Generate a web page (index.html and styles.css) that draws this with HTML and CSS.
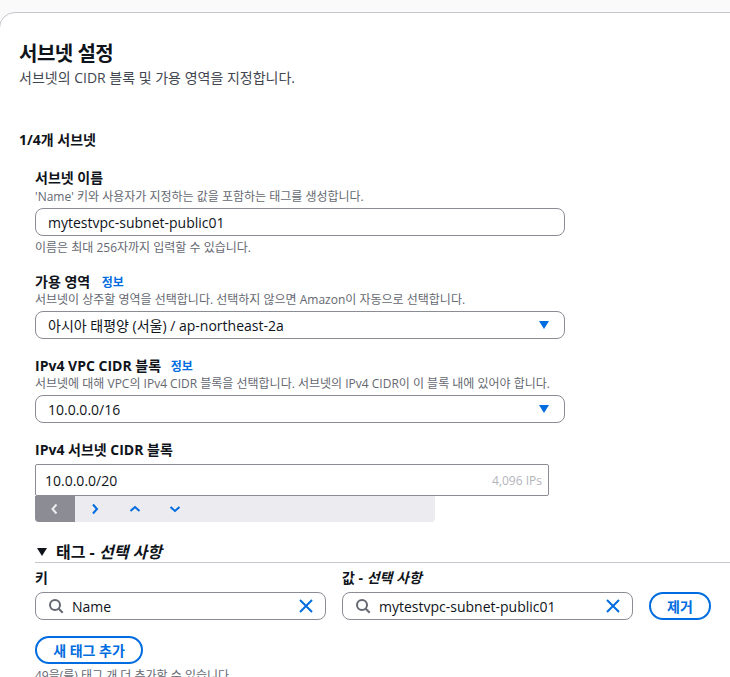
FILE: index.html
```html
<!DOCTYPE html>
<html lang="ko">
<head>
    <meta charset="UTF-8">
    <title>서브넷 설정</title>
    <link rel="stylesheet" href="styles.css">
</head>
<body>
    <div class="card">
        <h1 class="card-title">서브넷 설정</h1>
        <p class="card-desc">서브넷의 CIDR 블록 및 가용 영역을 지정합니다.</p>

        <h2 class="subnet-count">1/4개 서브넷</h2>

        <div class="subnet-form">
            <div class="field field-name">
                <div class="label">서브넷 이름</div>
                <div class="desc">'Name' 키와 사용자가 지정하는 값을 포함하는 태그를 생성합니다.</div>
                <div class="input">mytestvpc-subnet-public01</div>
                <div class="desc hint">이름은 최대 256자까지 입력할 수 있습니다.</div>
            </div>

            <div class="field field-az">
                <div class="label">가용 영역 <a class="info" href="#">정보</a></div>
                <div class="desc">서브넷이 상주할 영역을 선택합니다. 선택하지 않으면 Amazon이 자동으로 선택합니다.</div>
                <div class="input select">
                    <span>아시아 태평양 (서울) / ap-northeast-2a</span>
                    <span class="caret"></span>
                </div>
            </div>

            <div class="field field-vpc">
                <div class="label">IPv4 VPC CIDR 블록 <a class="info" href="#">정보</a></div>
                <div class="desc">서브넷에 대해 VPC의 IPv4 CIDR 블록을 선택합니다. 서브넷의 IPv4 CIDR이 이 블록 내에 있어야 합니다.</div>
                <div class="input select">
                    <span>10.0.0.0/16</span>
                    <span class="caret"></span>
                </div>
            </div>

            <div class="field">
                <div class="label">IPv4 서브넷 CIDR 블록</div>
                <div class="cidr-input">
                    <span>10.0.0.0/20</span>
                    <span class="cidr-count">4,096 IPs</span>
                </div>
                <div class="cidr-steps">
                    <button class="step step-off">
                        <svg width="16" height="16" viewBox="0 0 16 16"><path d="M9.5 3.5 5.5 8l4 4.5"/></svg>
                    </button>
                    <button class="step">
                        <svg width="16" height="16" viewBox="0 0 16 16"><path d="M6 3.5 10 8l-4 4.5"/></svg>
                    </button>
                    <button class="step">
                        <svg width="16" height="16" viewBox="0 0 16 16"><path d="M3.5 10 8 6l4.500 4"/></svg>
                    </button>
                    <button class="step">
                        <svg width="16" height="16" viewBox="0 0 16 16"><path d="M3.500 6 8 10l4.500-4"/></svg>
                    </button>
                </div>
            </div>
        </div>

        <div class="tags">
            <div class="tags-head"><span class="tags-arrow"></span>태그 - <em>선택 사항</em></div>
            <div class="tag-row">
                <div class="tag-col">
                    <div class="label">키</div>
                    <div class="input search">
                        <svg class="search-icon" width="16" height="16" viewBox="0 0 16 16"><circle cx="7" cy="7" r="5"/><path d="m10.700 10.700 4 4"/></svg>
                        <span class="search-text">Name</span>
                        <svg class="clear-icon" width="16" height="16" viewBox="0 0 16 16"><path d="m2 2 12 12M14 2 2 14"/></svg>
                    </div>
                </div>
                <div class="tag-col">
                    <div class="label">값 - <em>선택 사항</em></div>
                    <div class="input search">
                        <svg class="search-icon" width="16" height="16" viewBox="0 0 16 16"><circle cx="7" cy="7" r="5"/><path d="m10.700 10.700 4 4"/></svg>
                        <span class="search-text">mytestvpc-subnet-public01</span>
                        <svg class="clear-icon" width="16" height="16" viewBox="0 0 16 16"><path d="m2 2 12 12M14 2 2 14"/></svg>
                    </div>
                </div>
                <button class="btn btn-remove">제거</button>
            </div>
            <button class="btn btn-add">새 태그 추가</button>
            <div class="desc tag-limit">49을(를) 태그 개 더 추가할 수 있습니다.</div>
        </div>
    </div>
</body>
</html>
```

FILE: styles.css
```css
* {
    margin: 0;
    padding: 0;
    box-sizing: border-box;
    font-family: 'Open Sans', 'Noto Sans CJK KR', sans-serif;
}

html, body {
    height: 677px;
    overflow: hidden;
}

body {
    background: #fafafa;
    color: #0f141a;
    padding-top: 12px;
}

.card {
    width: 760px;
    height: 700px;
    margin-left: -1px;
    padding: 28px 0 0 19px;
    background: white;
    border: 1px solid #c6c6cd;
    border-radius: 16px;
}

.card-title {
    font-size: 20px;
    line-height: 26px;
    font-weight: 700;
    letter-spacing: -0.5px;
}

.card-desc {
    font-size: 14px;
    line-height: 20px;
    color: #424650;
    margin-top: 1px;
}

.subnet-count {
    font-size: 14px;
    line-height: 20px;
    font-weight: 700;
    margin-top: 42px;
}

.subnet-form {
    width: 530px;
    margin: 19px 0 0 16px;
}

.field-name {
    margin-bottom: 17px;
}

.field-az,
.field-vpc {
    margin-bottom: 18px;
}

.label {
    font-size: 14px;
    line-height: 18px;
    font-weight: 700;
}

.label em {
    font-weight: 700;
}

.info {
    margin-left: 8px;
    font-size: 12px;
    line-height: 1;
    color: #006ce0;
    text-decoration: none;
}

.field-vpc .info {
    margin-left: 6px;
}

.desc {
    font-size: 12px;
    line-height: 16px;
    color: #656871;
    margin-top: 2px;
}

.field-az .desc,
.field-vpc .desc {
    margin-top: 1px;
}

.hint {
    margin-top: 4px;
}

.input {
    display: flex;
    align-items: center;
    justify-content: space-between;
    height: 28px;
    margin-top: 3px;
    padding: 0 12px;
    font-size: 14px;
    border: 1px solid #8c8c94;
    border-radius: 8px;
    background: white;
}

.caret {
    width: 0;
    height: 0;
    margin-right: 3px;
    border-left: 5px solid transparent;
    border-right: 5px solid transparent;
    border-top: 8px solid #006ce0;
}

.cidr-input {
    display: flex;
    align-items: center;
    justify-content: space-between;
    width: 514px;
    height: 32px;
    margin-top: 5px;
    padding: 0 6px 0 9px;
    font-size: 14px;
    border: 1px solid #8c8c94;
    border-radius: 2px;
}

.cidr-count {
    font-size: 12px;
    color: #b4b4bb;
}

.cidr-steps {
    display: flex;
    width: 400px;
    height: 26px;
    background: #ebebf0;
    border-radius: 0 0 4px 4px;
    overflow: hidden;
}

.step {
    width: 40px;
    display: flex;
    align-items: center;
    justify-content: center;
    border: none;
    background: none;
}

.step svg {
    fill: none;
    stroke: #006ce0;
    stroke-width: 2;
}

.step-off {
    background: #8c8c94;
}

.step-off svg {
    stroke: #ebebf0;
}

.tags {
    margin: 20px 0 0 16px;
}

.tags-head {
    display: flex;
    align-items: center;
    height: 20px;
    font-size: 16px;
    line-height: 20px;
    font-weight: 700;
    white-space: pre;
}

.tags-head em {
    font-weight: 700;
}

.tags-arrow {
    width: 0;
    height: 0;
    margin: 0 9px 0 2px;
    border-left: 5px solid transparent;
    border-right: 5px solid transparent;
    border-top: 8px solid #0f141a;
}

.tag-row {
    display: flex;
    align-items: flex-end;
    gap: 16px;
    padding-top: 6px;
    border-top: 1px solid #c6c6cd;
}

.tag-col {
    width: 291px;
}

.tag-row .input {
    margin-top: 5px;
}

.search {
    justify-content: flex-start;
}

.search-icon {
    flex: none;
    fill: none;
    stroke: #656871;
    stroke-width: 2;
}

.search-text {
    flex: 1;
    margin-left: 8px;
}

.clear-icon {
    flex: none;
    margin-right: -1px;
    fill: none;
    stroke: #006ce0;
    stroke-width: 2;
}

.btn {
    height: 28px;
    font-size: 14px;
    font-weight: 700;
    color: #006ce0;
    background: white;
    border: 2px solid #006ce0;
    border-radius: 20px;
}

.btn-remove {
    width: 62px;
}

.btn-add {
    display: block;
    width: 108px;
    margin-top: 16px;
}

.tag-limit {
    margin-top: 4px;
}
```
